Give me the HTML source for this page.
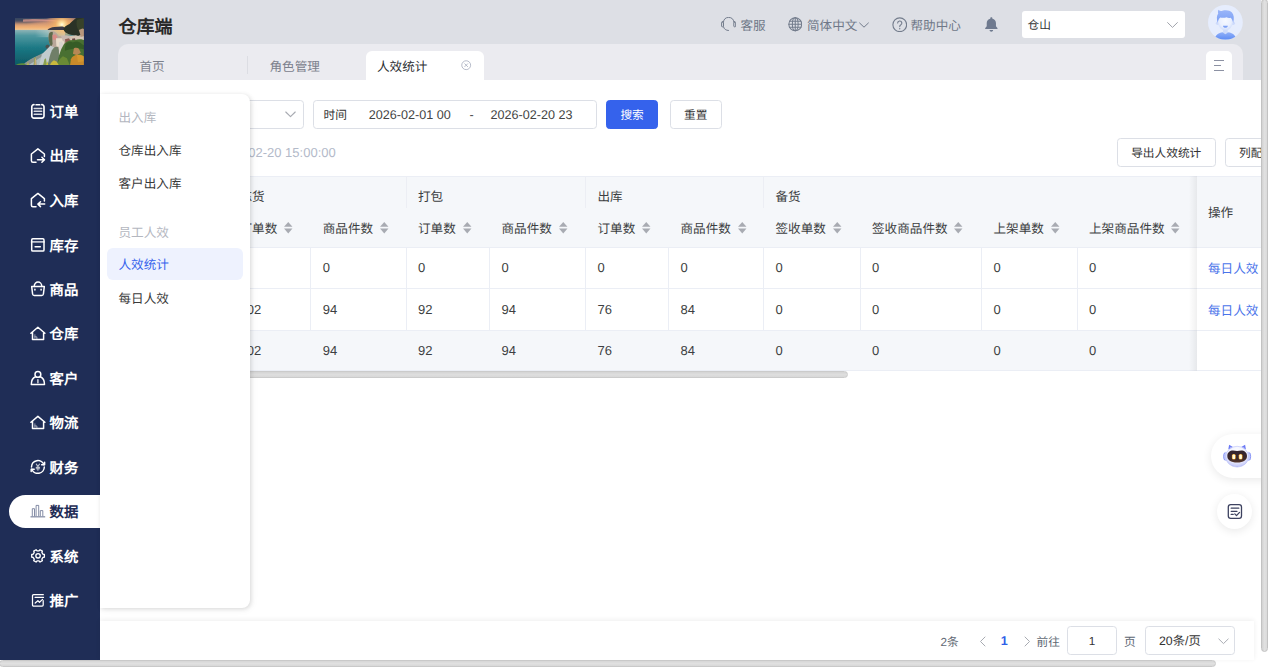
<!DOCTYPE html>
<html lang="zh-CN">
<head>
<meta charset="utf-8">
<title>人效统计</title>
<style>
*{box-sizing:border-box;margin:0;padding:0}
html,body{width:1268px;height:667px;overflow:hidden;background:#fff}
body{text-rendering:geometricPrecision;position:relative;font-family:"Liberation Sans",sans-serif;font-size:13px;color:#333;-webkit-font-smoothing:antialiased}
.abs{position:absolute}
/* sidebar */
#side{position:absolute;left:0;top:0;width:100px;height:660px;background:#1f2d56}
#logo{position:absolute;left:15.400px;top:17.900px;width:68.900px;height:47.400px;display:block}
.mi{position:absolute;left:0;width:100px;height:34px;color:#fff;font-weight:bold;font-size:14.4px;line-height:34px;white-space:nowrap}
.mi span{position:absolute;left:49.500px;top:1.500px}
.mi.on{left:8.800px;width:91.200px;height:33.400px;margin-top:.2px;background:#fff;border-radius:16.700px 0 0 16.700px;color:#1f2d56}
.mi.on span{left:40.700px;top:1.300px}
/* header */
#hdr{position:absolute;left:100px;top:0;width:1161px;height:80px;background:#dddfe5}
#title{position:absolute;left:18.5px;top:13.5px;font-size:18px;font-weight:bold;color:#2a2a2a;line-height:26px;white-space:nowrap}
.hi{position:absolute;top:15.500px;height:20px;line-height:20px;font-size:12.6px;color:#6f7888;white-space:nowrap}
#tabs{position:absolute;left:18px;top:43.5px;width:1124.5px;height:36.5px;background:#ebebf0;border-radius:10px 10px 0 0}
.tab{position:absolute;top:13px;font-size:12.6px;line-height:20px;color:#7b808c;white-space:nowrap}
#tabon{position:absolute;left:248px;top:7px;width:118px;height:29.5px;background:#fff;border-radius:6px 6px 0 0}
#tabmenu{position:absolute;left:1088.3px;top:7px;width:25.4px;height:29.5px;background:#fff;border-radius:5px 5px 0 0}
/* main */
#main{position:absolute;left:100px;top:80px;width:1161px;height:580px;background:#fff;overflow:hidden}
.box{position:absolute;height:28.5px;border:1px solid #dcdfe6;border-radius:3.600px;background:#fff;font-size:11.7px;line-height:29px;color:#333;white-space:nowrap}
.btn{text-align:center}
.btn.pri{background:#3562ec;border-color:#3562ec;color:#fff}
.hic{fill:none;stroke:#737c8c;stroke-width:1;stroke-linecap:round;stroke-linejoin:round}

/* table */
#tbl{position:absolute;left:0;top:96px;width:1161px;height:195px}
.th{position:absolute;background:#f5f7fa}
.cell{position:absolute;font-size:12.6px;line-height:20px;color:#3d3f42;white-space:nowrap}
.hl{position:absolute;height:1px;background:#ebeef5}
.vl{position:absolute;width:1px;background:#ebeef5}
.sort{position:absolute;width:10.500px;height:13.300px}
.lnk{color:#4a74ea}
/* popup */
#pop{position:absolute;left:100px;top:94px;width:150.400px;height:513.500px;background:#fff;border-radius:0 8px 8px 0;box-shadow:1px 1px 4px rgba(0,0,0,.13),2px 2px 9px rgba(0,0,0,.04)}
.pg{position:absolute;left:18.500px;font-size:12.6px;line-height:20px;color:#b4b7bf;white-space:nowrap}
.pi{position:absolute;left:18.500px;font-size:12.6px;line-height:20px;color:#3a3a3a;white-space:nowrap}
/* pagination */
#pager{position:absolute;left:100px;top:621px;width:1153.500px;height:39px;background:#fff;box-shadow:0 -1px 5px rgba(0,0,0,.07)}
.pt{position:absolute;top:11.500px;font-size:11.7px;line-height:20px;color:#606873;white-space:nowrap}
.num{font-size:13px}
.dt{font-size:12.6px;color:#444}
</style>
</head>
<body>
<div id="side">
<svg id="logo" viewBox="0 0 69 47" preserveAspectRatio="none">
<defs>
<linearGradient id="lsky" x1="0" y1="0" x2="0" y2="1"><stop offset="0" stop-color="#46506c"/><stop offset=".3" stop-color="#b98474"/><stop offset=".75" stop-color="#f0b074"/><stop offset="1" stop-color="#f3cfa0"/></linearGradient>
<linearGradient id="lsea" x1="0" y1="0" x2="0" y2="1"><stop offset="0" stop-color="#8fb4b6"/><stop offset=".15" stop-color="#4f98a0"/><stop offset=".5" stop-color="#1b7783"/><stop offset="1" stop-color="#0b5560"/></linearGradient>
<radialGradient id="lsun" cx="47" cy="6.500" r="16" gradientUnits="userSpaceOnUse"><stop offset="0" stop-color="#fffbe6"/><stop offset=".12" stop-color="#ffe9a8"/><stop offset=".4" stop-color="#f8b868" stop-opacity=".75"/><stop offset="1" stop-color="#f0a060" stop-opacity="0"/></radialGradient>
<linearGradient id="lsheen" x1="0" y1="0" x2="1" y2="0"><stop offset="0" stop-color="#fff" stop-opacity="0"/><stop offset=".8" stop-color="#ffe8c8" stop-opacity=".55"/><stop offset="1" stop-color="#ffe8c8" stop-opacity=".7"/></linearGradient>
<filter id="lblur2" x="-30%" y="-100%" width="160%" height="300%"><feGaussianBlur stdDeviation="1.600"/></filter>
<filter id="lblur" x="-5%" y="-5%" width="110%" height="110%"><feGaussianBlur stdDeviation=".55"/></filter>
<clipPath id="lclip"><rect width="69" height="47"/></clipPath>
</defs>
<g clip-path="url(#lclip)"><g filter="url(#lblur)">
<rect x="-2" y="-2" width="73" height="15" fill="url(#lsky)"/>
<ellipse cx="6" cy="-2" rx="30" ry="6.500" fill="#33425f" opacity=".92" filter="url(#lblur2)"/>
<path d="M8 1.500c12-1.200 30-.5 44 2.500-14-1-30-1.200-44-.2z" fill="#e8a090" opacity=".7"/>
<rect x="-2" y="11.800" width="73" height="37" fill="url(#lsea)"/>
<rect x="20" y="12" width="30" height="7" fill="url(#lsheen)"/>
<rect x="-2" y="-2" width="73" height="26" fill="url(#lsun)"/>
<path d="M32.500 12c1.500-1.800 4-2.800 7-3 3-.1 6.500-.8 9-.3l4 3.300z" fill="#3b3a48"/>
<path d="M71 -2h-7.500c-3 2.500-6.500 5.500-9 8-2.500 1.200-5 2.200-6 5 .5 2.200 2.500 4.500 5.500 5l8 2 9-1z" fill="#2a3226"/>
<path d="M62 2c2-1 5-2 9-2v12l-6 2c-3-3-4-8-3-12z" fill="#38422a"/>
<path d="M34 15c1-2 3-2.500 5-1.500 2 1 3.500 2.500 4.500 4l8 1.500 6-1.500 5 .5 7-3v16l-26 2-7-3c-2-4-3.500-10-2.500-15z" fill="#b9a79a"/>
<path d="M34 15.500c1.200-1.800 2.800-2 4-1.200-.6 3-.8 7.500-.3 11.500l-1.700 2.700c-2-3.500-3-9-2-13z" fill="#5f6a4c"/>
<path d="M37.500 17l3-1 2 2.500-1 3h-3.500z" fill="#d98c86"/>
<path d="M41 20h7l1.500 3.500-1 5h-7z" fill="#e8dccb"/>
<path d="M46 17.500l5-.5 6 1v4l-9 1z" fill="#c8b8b0"/>
<path d="M50 21l4-1 2 3-1 3.500-4 .5z" fill="#8c5a50"/>
<path d="M55 18l6-1 5 1.500 5-1.500v6l-14 2z" fill="#d6c6b6"/>
<path d="M57 20.500l3-.5 1 3-3 1z" fill="#6a4a44"/>
<path d="M64 12l3.500-1.500 3.500 1v6l-5 1z" fill="#b8977c"/>
<path d="M30.500 28c1-1.500 2.800-1.800 3.800-.8.800 1 .2 2.600-1 3.200-1.500.4-3-.8-2.800-2.400z" fill="#4a5150"/>
<path d="M7 47c5-4 12-7.500 19-10.500 3.500-2 6.500-5 9.500-9l3 1.500c-.5 6-2.500 12-6 18z" fill="#aebbbf"/>
<path d="M7.500 47c4-4 9-6.800 15-9.500l5-2.500 1.500 2-16 10z" fill="#8d958e"/>
<path d="M27 36l8.500-8.500 3.500 1.500-2 8-4 7-9 3z" fill="#c3ccce"/>
<path d="M37 32c2-3 4-4 6-3l2 6-3 12h-9c1-6 2-11 4-15z" fill="#6f7f68"/>
<path d="M44 24l3-1 2 4-1 8-4 2z" fill="#d8d4cc"/>
<path d="M49 26c3-3 7-4.500 11-4 4-1.500 8-1 11 1v26H42c1-9 3-17 7-23z" fill="#4a7030"/>
<path d="M51 25.500c2-2 5-2.600 7-1.200 2-1.200 5-1.200 7 0 2 1.200 3 2.800 6 3.200v4c-4-1-8-1.500-12-1-3 .2-6 .8-9 2 0-2.500 .3-5 1-7z" fill="#355c26"/>
<path d="M59 30c2-.8 4-.5 5 .5l2 4-4 2.500-4-1.500z" fill="#c98c5a" opacity=".85"/>
<path d="M56 41c1-3 4-4.500 7-4.500 3 0 5.500 1 7 3v8H55z" fill="#c98a2a"/>
<path d="M62 37c2-1 5-.5 7 1v5l-6 1z" fill="#d89a30" opacity=".8"/>
<path d="M42 47c1-4 3-7 6-9l4 2 3 7z" fill="#6a8a34"/>
<path d="M35 47c.5-2 2-4 4-5l3 1.500 2 3.500z" fill="#c9b93c"/>
<path d="M28 47l1.500-6 1.500-1 1 7zM18.500 47l1-7.500 1.500-.5.5 8z" fill="#8aa050"/>
<path d="M19.500 47l.5-7 1 .2.300 6.800z" fill="#c8a878"/>
<path d="M0 47c3-2 6-2.500 9-2l3 2z" fill="#5f8a3c"/>
<path d="M12 47l1-3.500 1 3.500zM31 47l1.500-4 1 4z" fill="#c9c040"/>
</g></g></svg>
<div class="mi" style="top:94.70px"><span>订单</span></div>
<div class="mi" style="top:138.90px"><span>出库</span></div>
<div class="mi" style="top:183.50px"><span>入库</span></div>
<div class="mi" style="top:228.25px"><span>库存</span></div>
<div class="mi" style="top:272.35px"><span>商品</span></div>
<div class="mi" style="top:316.70px"><span>仓库</span></div>
<div class="mi" style="top:361.45px"><span>客户</span></div>
<div class="mi" style="top:405.80px"><span>物流</span></div>
<div class="mi" style="top:450.00px"><span>财务</span></div>
<div class="mi on" style="top:494.60px"><span>数据</span></div>
<div class="mi" style="top:539.20px"><span>系统</span></div>
<div class="mi" style="top:583.70px"><span>推广</span></div>
<svg class="abs" style="left:0;top:0;width:100px;height:660px;fill:none;stroke:#fff;stroke-width:1.500;stroke-linecap:round;stroke-linejoin:round" viewBox="0 0 100 660">
<g transform="translate(0 111.35)"><path d="M34-6.700H33.900a2.100 2.100 0 0 0-2.100 2.100V4.600a2.100 2.100 0 0 0 2.100 2.100H41.900a2.100 2.100 0 0 0 2.100-2.100V-4.600a2.100 2.100 0 0 0-2.100-2.100H41.800" stroke-width="1.650"/><path d="M36.100-6.600H39.700" stroke-width="1.700"/><path d="M34.200-2.850H41.700M34.200 0H41.700M34.200 2.850H41.700" stroke-width="1.500" opacity=".82"/></g>
<g transform="translate(0 155.55)"><path d="M36 6.65H32.9a1.500 1.500 0 0 1-1.500-1.500V-1.550L37.900-6.750 44.400-1.550V.85"/><path d="M37.500 4.150H44.200M41.900 1.650L44.500 4.150 41.900 6.650"/></g>
<g transform="translate(0 200.15)"><path d="M36 6.65H32.9a1.500 1.500 0 0 1-1.500-1.500V-1.550L37.900-6.750 44.400-1.550V.85"/><path d="M44.700 3.950H38.200M40.500 1.550L37.900 3.950 40.500 6.450"/></g>
<g transform="translate(0 244.90)"><rect x="31.700" y="-6.100" width="12.300" height="12.200" rx="1.100"/><path d="M31.700-3H44" stroke-width="1.900" opacity=".72"/><path d="M35.100 1.800H40.300"/></g>
<g transform="translate(0 289.00)"><path d="M31.700-2.400H44.300L43.400 5a1.700 1.700 0 0 1-1.700 1.500H34.300a1.700 1.700 0 0 1-1.700-1.500z"/><path d="M34.300-2.400V-3.200a3.700 3.700 0 0 1 7.400 0V-2.400M34.900.2v.7M41.100.2v.7"/></g>
<g transform="translate(0 333.35)"><path d="M30.900-.15L37.900-6.050 44.900-.15M32.500-1.350V6.050H43.600V-1.350"/><path d="M34.900 1.350V4.800M34.900 3.500H36.900V5.300" stroke-width=".9" opacity=".6"/></g>
<g transform="translate(0 378.10)"><circle cx="37.900" cy="-3.700" r="2.900"/><path d="M35.500-1.300C33-.2 31.300 2.500 31.300 6.300H44.500C44.500 2.500 42.800-.2 40.300-1.300"/><path d="M37.900 1.600V4.600" opacity=".8"/></g>
<g transform="translate(0 422.45)"><path d="M30.900-.15L37.900-6.050 44.900-.15M32.500-1.350V6.050H43.600V-1.350"/><path d="M34.900 1.350V4.800M34.900 3.500H36.900V5.300" stroke-width=".9" opacity=".6"/></g>
<g transform="translate(0 466.65)"><path d="M31.500.3A6.400 6.400 0 0 1 43.900-1.900M44.300.3A6.400 6.400 0 0 1 31.900 2.500"/><path d="M44.600-4.300V-2H41.600M31.200 4.900V2.600H34.200"/><path d="M36.300-2.500L37.900-.2 39.500-2.500M37.900-.2V3.500M36.200.7H39.600M36.200 2.100H39.600" stroke-width="1.100" opacity=".72"/></g>
<g transform="translate(0 511.25)" stroke="#66708f"><path d="M30.900 5.600H44.800" stroke-width="1"/><path d="M32.300 4.550V-2.550H34.500V4.550M36.100 4.550V-5.850H38.700V4.550M40.300 4.550V-.65H42.800V4.550" stroke-width=".8"/></g>
<g transform="translate(0 555.85)" stroke-width="1.350"><path d="M42.87 -1.66L44.36 -1.34L44.36 1.34L42.87 1.66L41.90 3.35L42.37 4.79L40.04 6.13L39.02 5.01L37.08 5.01L36.06 6.13L33.73 4.79L34.20 3.35L33.23 1.66L31.74 1.34L31.74 -1.34L33.23 -1.66L34.20 -3.35L33.73 -4.79L36.06 -6.13L37.08 -5.01L39.02 -5.01L40.04 -6.13L42.37 -4.79L41.90 -3.35Z"/><circle cx="38.050" cy="0" r="2.200"/></g>
<g transform="translate(0 600.35)" stroke-width="1.250"><path d="M43.200.2V4.600a1.100 1.100 0 0 1-1.100 1.100H33.600a1.100 1.100 0 0 1-1.100-1.100V-4.600a1.100 1.100 0 0 1 1.100-1.100H43.300"/><path d="M35.100-2.900H43.500M35.200 2.700L37.900.4 39.500 1.900 42.600-1"/></g>
</svg>
</div>
<div id="hdr">
<div id="title">仓库端</div>

<svg class="abs hic" style="left:621.200px;top:17.300px;width:15px;height:14.500px" viewBox="0 0 15 14.500"><path d="M2.400 5A5.300 5.300 0 0 1 12.900 5"/><rect x=".6" y="4.900" width="1.900" height="4.900" rx=".7"/><rect x="12.800" y="4.900" width="1.900" height="4.900" rx=".7"/><path d="M2.500 9.900C3 12.100 4.900 13.400 7.500 13.500"/></svg>
<div class="hi" style="left:640.5px">客服</div>
<svg class="abs hic" style="left:687.5px;top:17px;width:14.5px;height:14.5px" viewBox="0 0 14 14"><circle cx="7" cy="7" r="6.2"/><ellipse cx="7" cy="7" rx="2.8" ry="6.2"/><path d="M7 .8v12.4M.8 7h12.4M1.5 4.200h11M1.5 9.800h11" /></svg>
<div class="hi" style="left:707px">简体中文</div>
<svg class="abs hic" style="left:759px;top:19.5px;width:10px;height:10px" viewBox="0 0 10 10"><path d="M.6 3l4.4 4.2L9.4 3"/></svg>
<svg class="abs hic" style="left:791.5px;top:16.5px;width:15.5px;height:15.5px" viewBox="0 0 14 14"><circle cx="7" cy="7" r="6.2"/><path d="M5.1 5.4a1.9 1.9 0 1 1 2.7 1.8c-.5.3-.8.7-.8 1.4M7 10.2v.5"/></svg>
<div class="hi" style="left:810.5px">帮助中心</div>
<svg class="abs" style="left:883.700px;top:16.500px;width:14.700px;height:15.500px" viewBox="0 0 14 15.5" preserveAspectRatio="none"><path fill="#6f7a8f" d="M7 .3c.6 0 1 .4 1 1v.4c2 .5 3.4 2.200 3.400 4.400v3.100l1.400 1.700c.3.400 0 1-.5 1H1.700c-.5 0-.8-.6-.5-1l1.400-1.700V6.100C2.600 3.900 4 2.200 6 1.700v-.4c0-.6.400-1 1-1zM5.300 13h3.400c0 .9-.8 1.700-1.700 1.700s-1.700-.8-1.700-1.700z"/></svg>
<div class="abs" style="left:922px;top:10.5px;width:163px;height:27.5px;background:#fff;border-radius:3px;font-size:11.7px;line-height:29.500px;color:#333;padding-left:5.500px">仓山</div>
<svg class="abs hic" style="left:1067px;top:19.500px;width:11px;height:10px;stroke:#a0a3ab" viewBox="0 0 11 10"><path d="M.6 2.600l4.900 4.800 4.900-4.800"/></svg>
<svg class="abs" style="left:1108px;top:5.200px;width:34.800px;height:34.800px" viewBox="0 0 35 35"><defs><clipPath id="avc"><circle cx="17.500" cy="17.500" r="17.500"/></clipPath><linearGradient id="avh" x1="0" y1="0" x2="0" y2="1"><stop offset="0" stop-color="#9ab6f9"/><stop offset="1" stop-color="#7b9ff5"/></linearGradient><linearGradient id="avs" x1="0" y1="0" x2="0" y2="1"><stop offset="0" stop-color="#93b2f9"/><stop offset="1" stop-color="#5d8bf4"/></linearGradient><radialGradient id="avf" cx=".5" cy=".4" r=".65"><stop offset="0" stop-color="#f6f9ff"/><stop offset=".6" stop-color="#eaf0fe"/><stop offset="1" stop-color="#c9d8fb"/></radialGradient></defs><circle cx="17.500" cy="17.500" r="17.500" fill="#e6edfd"/><g clip-path="url(#avc)"><path d="M6.500 35c.6-4.800 4.400-7.800 11-7.800s10.400 3 11 7.800z" fill="url(#avs)"/><path d="M15.200 23.500h4.600v4.300l-2.300 1.700-2.300-1.700z" fill="#cfdcfb"/><circle cx="9.700" cy="18.300" r="1.800" fill="#cddafb"/><circle cx="25.300" cy="18.300" r="1.800" fill="#cddafb"/><ellipse cx="17.500" cy="17.300" rx="7.400" ry="8.300" fill="url(#avf)"/><path d="M9.700 17.800c-1.200-4.300-1-7.300.6-9.300-.5-1.500-.3-2.700.3-3.800 1.200 1.300 2.300 1.500 3.900 1 3.400-1 7.500-.5 9.600 1.800 2 2.200 2.400 5.800 1.200 10.300-.5-2.200-1.300-3.800-2.400-5-1.800.5-3.200.2-4.300-.6-1.500.8-4 1-6.300.3-1.400 1.300-2.200 3-2.600 5.300z" fill="url(#avh)"/><path d="M15 20.800h5c-.3 1.400-1.200 2.100-2.500 2.100s-2.200-.7-2.500-2.100z" fill="#7da1f6"/></g></svg>
<div id="tabs">
<div class="tab" style="left:21.5px">首页</div>
<div class="abs" style="left:129px;top:12.5px;width:1px;height:18px;background:#dcdde3"></div>
<div class="tab" style="left:151.5px">角色管理</div>
<div id="tabon"></div>
<div class="tab" style="left:259px;color:#2b2d30">人效统计</div>
<svg class="abs" style="left:343.300px;top:16.700px;width:10.400px;height:10.400px;fill:none;stroke:#aab0c0;stroke-width:.9" viewBox="0 0 11 11"><circle cx="5.500" cy="5.500" r="4.700"/><path d="M3.700 3.700l3.600 3.600M7.300 3.700L3.700 7.300"/></svg>
<div id="tabmenu"><div class="abs" style="left:7.500px;top:9.500px;width:10.500px;height:1.400px;background:#8c91a3"></div><div class="abs" style="left:7.500px;top:14.300px;width:7.500px;height:1.400px;background:#8c91a3"></div><div class="abs" style="left:7.500px;top:19px;width:10.500px;height:1.400px;background:#8c91a3"></div></div>
</div>
</div>
<div id="main">
<div class="box" style="left:120px;top:20px;width:83.500px"></div>
<svg class="abs" style="left:185px;top:30.400px;width:11px;height:9px;fill:none;stroke:#a8abb2;stroke-width:1.150;stroke-linecap:round;stroke-linejoin:round" viewBox="0 0 11 9"><path d="M.8 2l4.700 4.600L10.200 2"/></svg>
<div class="box" style="left:213px;top:20px;width:283.500px"><span class="abs" style="left:9.500px">时间</span><span class="abs dt" style="left:54.800px">2026-02-01 00</span><span class="abs dt" style="left:155.500px">-</span><span class="abs dt" style="left:176.500px">2026-02-20 23</span></div>
<div class="box btn pri" style="left:506px;top:20px;width:52.200px">搜索</div>
<div class="box btn" style="left:569.600px;top:20px;width:52.300px">重置</div>
<div class="abs" style="left:24px;top:62.500px;font-size:13px;line-height:20px;color:#b3bac9;white-space:nowrap">数据更新时间：2026-02-20 15:00:00</div>
<div class="box btn" style="left:1016.500px;top:58px;width:99.500px">导出人效统计</div>
<div class="box" style="left:1124.500px;top:58px;width:76px;padding-left:13.500px">列配置</div>
<div id="tbl">
<div class="th" style="left:0;top:0;width:1161px;height:71.500px"></div>
<div class="th" style="left:0;top:154px;width:1097px;height:40.500px"></div>
<div class="hl" style="left:0;top:0px;width:1161px"></div>
<div class="hl" style="left:0;top:71px;width:1161px"></div>
<div class="hl" style="left:0;top:112px;width:1161px"></div>
<div class="hl" style="left:0;top:153.5px;width:1161px"></div>
<div class="hl" style="left:0;top:194px;width:1161px"></div>
<div class="vl" style="left:210.2px;top:72px;height:82px"></div>
<div class="vl" style="left:305.5px;top:72px;height:82px"></div>
<div class="vl" style="left:389.0px;top:72px;height:82px"></div>
<div class="vl" style="left:485.0px;top:72px;height:82px"></div>
<div class="vl" style="left:568.0px;top:72px;height:82px"></div>
<div class="vl" style="left:663.0px;top:72px;height:82px"></div>
<div class="vl" style="left:759.5px;top:72px;height:82px"></div>
<div class="vl" style="left:881.0px;top:72px;height:82px"></div>
<div class="vl" style="left:976.5px;top:72px;height:82px"></div>
<div class="vl" style="left:305.5px;top:0;height:32px;background:#eceef4"></div>
<div class="vl" style="left:485.0px;top:0;height:32px;background:#eceef4"></div>
<div class="vl" style="left:663.0px;top:0;height:32px;background:#eceef4"></div>
<div class="cell" style="left:139.5px;top:11px">拣货</div>
<div class="cell" style="left:318.0px;top:11px">打包</div>
<div class="cell" style="left:497.5px;top:11px">出库</div>
<div class="cell" style="left:675.5px;top:11px">备货</div>
<div class="cell" style="left:139.5px;top:42.600px">订单数</div>
<svg class="sort" style="left:183.0px;top:44.800px" viewBox="0 0 9 12"><path d="M4.500 .8L8.300 5.200H.7z" fill="#a8abb2"/><path d="M4.500 11.200L8.300 6.800H.7z" fill="#a8abb2"/></svg>
<div class="cell" style="left:222.7px;top:42.600px">商品件数</div>
<svg class="sort" style="left:278.8px;top:44.800px" viewBox="0 0 9 12"><path d="M4.500 .8L8.300 5.200H.7z" fill="#a8abb2"/><path d="M4.500 11.200L8.300 6.800H.7z" fill="#a8abb2"/></svg>
<div class="cell" style="left:318.0px;top:42.600px">订单数</div>
<svg class="sort" style="left:361.5px;top:44.800px" viewBox="0 0 9 12"><path d="M4.500 .8L8.300 5.200H.7z" fill="#a8abb2"/><path d="M4.500 11.200L8.300 6.800H.7z" fill="#a8abb2"/></svg>
<div class="cell" style="left:401.5px;top:42.600px">商品件数</div>
<svg class="sort" style="left:457.6px;top:44.800px" viewBox="0 0 9 12"><path d="M4.500 .8L8.300 5.200H.7z" fill="#a8abb2"/><path d="M4.500 11.200L8.300 6.800H.7z" fill="#a8abb2"/></svg>
<div class="cell" style="left:497.5px;top:42.600px">订单数</div>
<svg class="sort" style="left:541.0px;top:44.800px" viewBox="0 0 9 12"><path d="M4.500 .8L8.300 5.200H.7z" fill="#a8abb2"/><path d="M4.500 11.200L8.300 6.800H.7z" fill="#a8abb2"/></svg>
<div class="cell" style="left:580.5px;top:42.600px">商品件数</div>
<svg class="sort" style="left:636.6px;top:44.800px" viewBox="0 0 9 12"><path d="M4.500 .8L8.300 5.200H.7z" fill="#a8abb2"/><path d="M4.500 11.200L8.300 6.800H.7z" fill="#a8abb2"/></svg>
<div class="cell" style="left:675.5px;top:42.600px">签收单数</div>
<svg class="sort" style="left:731.6px;top:44.800px" viewBox="0 0 9 12"><path d="M4.500 .8L8.300 5.200H.7z" fill="#a8abb2"/><path d="M4.500 11.200L8.300 6.800H.7z" fill="#a8abb2"/></svg>
<div class="cell" style="left:772.0px;top:42.600px">签收商品件数</div>
<svg class="sort" style="left:853.3px;top:44.800px" viewBox="0 0 9 12"><path d="M4.500 .8L8.300 5.200H.7z" fill="#a8abb2"/><path d="M4.500 11.200L8.300 6.800H.7z" fill="#a8abb2"/></svg>
<div class="cell" style="left:893.5px;top:42.600px">上架单数</div>
<svg class="sort" style="left:949.6px;top:44.800px" viewBox="0 0 9 12"><path d="M4.500 .8L8.300 5.200H.7z" fill="#a8abb2"/><path d="M4.500 11.200L8.300 6.800H.7z" fill="#a8abb2"/></svg>
<div class="cell" style="left:989.0px;top:42.600px">上架商品件数</div>
<svg class="sort" style="left:1070.3px;top:44.800px" viewBox="0 0 9 12"><path d="M4.500 .8L8.300 5.200H.7z" fill="#a8abb2"/><path d="M4.500 11.200L8.300 6.800H.7z" fill="#a8abb2"/></svg>
<div class="cell num" style="left:139.5px;top:82px">0</div>
<div class="cell num" style="left:222.7px;top:82px">0</div>
<div class="cell num" style="left:318.0px;top:82px">0</div>
<div class="cell num" style="left:401.5px;top:82px">0</div>
<div class="cell num" style="left:497.5px;top:82px">0</div>
<div class="cell num" style="left:580.5px;top:82px">0</div>
<div class="cell num" style="left:675.5px;top:82px">0</div>
<div class="cell num" style="left:772.0px;top:82px">0</div>
<div class="cell num" style="left:893.5px;top:82px">0</div>
<div class="cell num" style="left:989.0px;top:82px">0</div>
<div class="cell num" style="left:139.5px;top:123.5px">102</div>
<div class="cell num" style="left:222.7px;top:123.5px">94</div>
<div class="cell num" style="left:318.0px;top:123.5px">92</div>
<div class="cell num" style="left:401.5px;top:123.5px">94</div>
<div class="cell num" style="left:497.5px;top:123.5px">76</div>
<div class="cell num" style="left:580.5px;top:123.5px">84</div>
<div class="cell num" style="left:675.5px;top:123.5px">0</div>
<div class="cell num" style="left:772.0px;top:123.5px">0</div>
<div class="cell num" style="left:893.5px;top:123.5px">0</div>
<div class="cell num" style="left:989.0px;top:123.5px">0</div>
<div class="cell num" style="left:139.5px;top:165px">102</div>
<div class="cell num" style="left:222.7px;top:165px">94</div>
<div class="cell num" style="left:318.0px;top:165px">92</div>
<div class="cell num" style="left:401.5px;top:165px">94</div>
<div class="cell num" style="left:497.5px;top:165px">76</div>
<div class="cell num" style="left:580.5px;top:165px">84</div>
<div class="cell num" style="left:675.5px;top:165px">0</div>
<div class="cell num" style="left:772.0px;top:165px">0</div>
<div class="cell num" style="left:893.5px;top:165px">0</div>
<div class="cell num" style="left:989.0px;top:165px">0</div>
<div class="abs" style="left:1089px;top:0;width:8px;height:194.500px;background:linear-gradient(to right,rgba(0,0,0,0),rgba(0,0,0,.06))"></div>
<div class="abs" style="left:1097px;top:0;width:64px;height:194.500px;background:#fff"></div>
<div class="th" style="left:1097px;top:0;width:64px;height:71.500px"></div>
<div class="hl" style="left:1097px;top:0px;width:64px"></div>
<div class="hl" style="left:1097px;top:71px;width:64px"></div>
<div class="hl" style="left:1097px;top:112px;width:64px"></div>
<div class="hl" style="left:1097px;top:153.5px;width:64px"></div>
<div class="hl" style="left:1097px;top:194px;width:64px"></div>
<div class="cell" style="left:1108px;top:26.600px">操作</div>
<div class="cell lnk" style="left:1108px;top:83.300px">每日人效</div>
<div class="cell lnk" style="left:1108px;top:124.800px">每日人效</div>
<div class="abs" style="left:0;top:194.800px;width:748px;height:6.900px;border-radius:4px;background:linear-gradient(#d4d4d4,#dedede 50%,#d8d8d8);border:1px solid #cbcbcb"></div>
</div>
<div class="abs" style="left:1110.700px;top:354px;width:75px;height:44.400px;background:#fff;border-radius:22.200px 0 0 22.200px;box-shadow:0 2px 10px rgba(0,0,0,.09)"></div>
<svg class="abs" style="left:1121px;top:363px;width:32px;height:26px" viewBox="1221 443 32 26">
<defs><radialGradient id="rbg" cx=".5" cy=".3" r=".75"><stop offset="0" stop-color="#ffffff"/><stop offset=".6" stop-color="#eef0fe"/><stop offset=".85" stop-color="#c9cdf9"/><stop offset="1" stop-color="#8d92f4"/></radialGradient><linearGradient id="rface" x1="0" y1="0" x2="0" y2="1"><stop offset="0" stop-color="#33262f"/><stop offset=".7" stop-color="#3c2a2c"/><stop offset="1" stop-color="#5a3a30"/></linearGradient><filter id="rglow" x="-150%" y="-60%" width="400%" height="220%"><feGaussianBlur stdDeviation=".75"/></filter><filter id="rsoft" x="-10%" y="-10%" width="120%" height="120%"><feGaussianBlur stdDeviation=".25"/></filter></defs>
<g filter="url(#rsoft)">
<path d="M1228.300 449.500l.8-4.700 4.600 2.600zM1245.900 449.500l-.8-4.700-4.600 2.600z" fill="#6a78f5"/><path d="M1229.800 449l.3-2.200 2.600 1.500zM1244.400 449l-.3-2.200-2.600 1.500z" fill="#a9b3fa"/>
<ellipse cx="1226" cy="456.400" rx="2.500" ry="4.600" fill="#c3ccfb"/><ellipse cx="1248.300" cy="456.400" rx="2.500" ry="4.600" fill="#c3ccfb"/>
<path d="M1224.600 452.800a2.500 4.600 0 0 0 0 7.200M1249.700 452.800a2.500 4.600 0 0 1 0 7.200" fill="none" stroke="#8390f6" stroke-width=".9"/>
<ellipse cx="1237.150" cy="456.700" rx="11.400" ry="10.400" fill="url(#rbg)" stroke="#b9bff9" stroke-width=".6"/>
<path d="M1227.300 456c0-3.400 2.600-5.400 5.800-5.400 1.500 0 2.700.5 4.050.5s2.550-.5 4.050-.5c3.200 0 5.800 2 5.800 5.400 0 3.900-3.400 6.600-9.850 6.600s-9.850-2.700-9.850-6.600z" fill="url(#rface)"/>
</g>
<g filter="url(#rglow)"><rect x="1231.900" y="453.900" width="3.800" height="5.700" rx="1.700" fill="#f5a21c"/><rect x="1238.700" y="453.900" width="3.800" height="5.700" rx="1.700" fill="#f5a21c"/></g>
<rect x="1232.500" y="454.400" width="2.600" height="4.700" rx="1.200" fill="#fffbe0"/><rect x="1239.300" y="454.400" width="2.600" height="4.700" rx="1.200" fill="#fffbe0"/>
</svg>
<div class="abs" style="left:1116.600px;top:413.600px;width:35.800px;height:35.800px;background:#fff;border-radius:18px;box-shadow:0 2px 10px rgba(0,0,0,.09)"></div>
<svg class="abs" style="left:1126px;top:422px;width:18px;height:18px;fill:none;stroke:#3d4260;stroke-width:1.300;stroke-linecap:round;stroke-linejoin:round" viewBox="1226 502 18 18"><rect x="1228.300" y="504.700" width="13.200" height="13.600" rx="2.400"/><path d="M1231.200 508.200H1238.800M1231.200 511.300H1237M1231.200 514.400H1233.200M1234.800 513.900L1236.500 515.600 1239.500 512.400"/></svg>
</div>

<div id="pop">
<div class="pg" style="top:14px">出入库</div>
<div class="pi" style="top:46.500px">仓库出入库</div>
<div class="pi" style="top:79.500px">客户出入库</div>
<div class="pg" style="top:128.500px">员工人效</div>
<div class="abs" style="left:6.800px;top:154.200px;width:136px;height:32px;border-radius:6px;background:#eef2fe"></div>
<div class="pi" style="top:160.500px;color:#3562ec">人效统计</div>
<div class="pi" style="top:194.500px">每日人效</div>
</div>
<div id="pager">
<div class="pt" style="left:840.500px">2条</div>
<svg class="abs" style="left:879px;top:14.500px;width:8px;height:11px;fill:none;stroke:#a8abb2;stroke-width:1;stroke-linecap:round;stroke-linejoin:round" viewBox="0 0 8 11"><path d="M6 1L1.500 5.500 6 10"/></svg>
<div class="pt" style="left:900.800px;top:10.300px;color:#2f5fe8;font-weight:bold;font-size:12.600px">1</div>
<svg class="abs" style="left:923px;top:14.500px;width:8px;height:11px;fill:none;stroke:#a8abb2;stroke-width:1;stroke-linecap:round;stroke-linejoin:round" viewBox="0 0 8 11"><path d="M2 1l4.500 4.500L2 10"/></svg>
<div class="pt" style="left:936.500px">前往</div>
<div class="box" style="left:967px;top:5px;width:50px;text-align:center;color:#333">1</div>
<div class="pt" style="left:1024px">页</div>
<div class="box" style="left:1045px;top:5px;width:90px;color:#333;padding-left:13px;font-size:12.300px">20条/页</div>
<svg class="abs" style="left:1117.500px;top:15.500px;width:11px;height:9px;fill:none;stroke:#a8abb2;stroke-width:1;stroke-linecap:round;stroke-linejoin:round" viewBox="0 0 11 9"><path d="M.8 2l4.700 4.600L10.200 2"/></svg>
</div>
<div class="abs" style="left:-1px;top:659.800px;width:1217px;height:7.400px;border-radius:4px;background:linear-gradient(#d6d6d6,#e0e0e0 50%,#d8d8d8);border:1px solid #c9c9c9"></div>
<div class="abs" style="left:1260.800px;top:-1px;width:7.400px;height:653px;border-radius:4px;background:linear-gradient(to right,#d2d2d2,#e0e0e0 50%,#dadada);border:1px solid #c2c2c2"></div>
</body>
</html>
